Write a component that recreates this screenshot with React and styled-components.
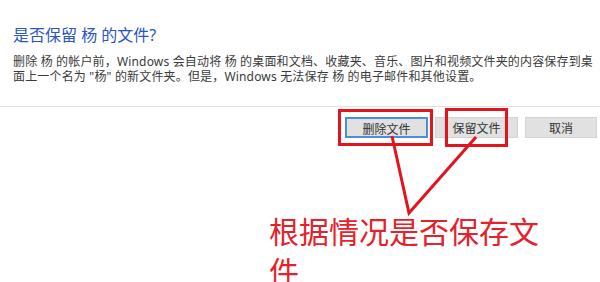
import React from "react";
import styled, { createGlobalStyle } from "styled-components";

const GlobalStyle = createGlobalStyle`
  html, body { margin: 0; padding: 0; background: #ffffff; }
  body { font-family: "Noto Sans CJK SC", "Noto Sans", sans-serif; }
`;

const Dialog = styled.div`
  position: relative;
  width: 600px;
  height: 282px;
  overflow: hidden;
  background: #ffffff;
  font-family: "Noto Sans", "Noto Sans CJK SC", sans-serif;
`;

const Header = styled.div`
  box-sizing: border-box;
  height: 107px;
  padding: 25px 0 0 13px;
  border-bottom: 1px solid #e3e3e3;
`;

const Title = styled.div`
  font-size: 16px;
  line-height: 20px;
  color: #2a55c2;
  margin-bottom: 9px;
  white-space: nowrap;
`;

const Message = styled.div`
  font-size: 12px;
  line-height: 15px;
  color: #3a3a3a;
  white-space: nowrap;
  letter-spacing: 0.17px;
`;

const Footer = styled.div`
  display: flex;
  justify-content: flex-end;
  gap: 7px;
  padding: 10px 3px 0 0;
`;

const Button = styled.button`
  box-sizing: border-box;
  width: ${(p) => p.$width || 83}px;
  height: 21px;
  margin: 0;
  padding: 0;
  font-family: "Noto Sans CJK SC", sans-serif;
  font-size: 12px;
  line-height: 19px;
  color: #333333;
  background: #e1e1e1;
  border: ${(p) => (p.$primary ? "2px solid #4a8fd8" : "1px solid #d4d4d4")};
`;

const Overlay = styled.svg`
  position: absolute;
  left: 0;
  top: 0;
  width: 600px;
  height: 282px;
  pointer-events: none;
`;

const Note = styled.div`
  position: absolute;
  left: 269px;
  top: 210px;
  width: 285px;
  font-family: "Noto Sans CJK SC", sans-serif;
  font-size: 30px;
  line-height: 40px;
  color: #e5222b;
`;

export default function App() {
  return (
    <>
      <GlobalStyle />
      <Dialog>
        <Header>
          <Title>是否保留 杨 的文件?</Title>
          <Message>
            删除 杨 的帐户前，Windows 会自动将 杨 的桌面和文档、收藏夹、音乐、图片和视频文件夹的内容保存到桌
          </Message>
          <Message>面上一个名为 "杨" 的新文件夹。但是，Windows 无法保存 杨 的电子邮件和其他设置。</Message>
        </Header>
        <Footer>
          <Button $primary>删除文件</Button>
          <Button>保留文件</Button>
          <Button $width={72}>取消</Button>
        </Footer>
        <Overlay viewBox="0 0 600 282">
          <g fill="none" stroke="#e3141d" strokeWidth="3">
            <rect x="339.5" y="110.5" width="92" height="34" />
            <rect x="446.5" y="109.5" width="60" height="36" />
            <polyline points="392,136 409,213 476,137" strokeLinejoin="miter" />
          </g>
        </Overlay>
        <Note>根据情况是否保存文件</Note>
      </Dialog>
    </>
  );
}
